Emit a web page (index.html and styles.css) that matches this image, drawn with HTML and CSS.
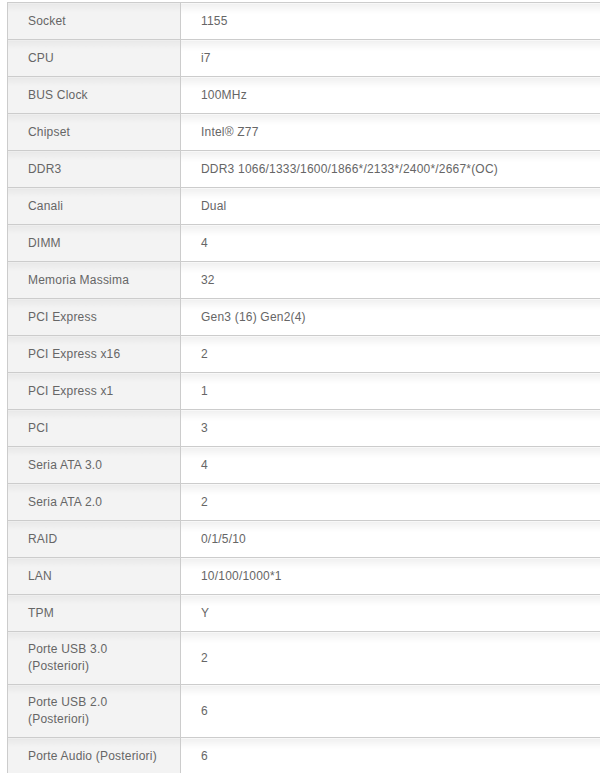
FILE: index.html
```html
<!DOCTYPE html>
<html>
<head>
<meta charset="utf-8">
<link rel="stylesheet" href="styles.css">
</head>
<body>
<table class="specs">
<tbody>
<tr><th>Socket</th><td>1155</td></tr>
<tr><th>CPU</th><td>i7</td></tr>
<tr><th>BUS Clock</th><td>100MHz</td></tr>
<tr><th>Chipset</th><td>Intel® Z77</td></tr>
<tr><th>DDR3</th><td>DDR3 1066/1333/1600/1866*/2133*/2400*/2667*(OC)</td></tr>
<tr><th>Canali</th><td>Dual</td></tr>
<tr><th>DIMM</th><td>4</td></tr>
<tr><th>Memoria Massima</th><td>32</td></tr>
<tr><th>PCI Express</th><td>Gen3 (16) Gen2(4)</td></tr>
<tr><th>PCI Express x16</th><td>2</td></tr>
<tr><th>PCI Express x1</th><td>1</td></tr>
<tr><th>PCI</th><td>3</td></tr>
<tr><th>Seria ATA 3.0</th><td>4</td></tr>
<tr><th>Seria ATA 2.0</th><td>2</td></tr>
<tr><th>RAID</th><td>0/1/5/10</td></tr>
<tr><th>LAN</th><td>10/100/1000*1</td></tr>
<tr><th>TPM</th><td>Y</td></tr>
<tr class="tall"><th>Porte USB 3.0<br>(Posteriori)</th><td>2</td></tr>
<tr class="tall"><th>Porte USB 2.0<br>(Posteriori)</th><td>6</td></tr>
<tr><th>Porte Audio (Posteriori)</th><td>6</td></tr>
</tbody>
</table>
</body>
</html>
```

FILE: styles.css
```css
html, body {
  margin: 0;
  padding: 0;
  background: #ffffff;
  overflow: hidden;
}
body {
  padding: 2px 0 0 7px;
}
.specs {
  border-collapse: collapse;
  width: 620px;
  font-family: "Liberation Sans", Arial, sans-serif;
  font-size: 12px;
  letter-spacing: 0.2px;
  color: #666666;
  border-top: 1px solid #cccccc;
  border-left: 1px solid #cccccc;
}
.specs th,
.specs td {
  height: 37px;
  padding: 0 0 0 20px;
  text-align: left;
  font-weight: normal;
  vertical-align: middle;
  border-bottom: 1px solid #cccccc;
  line-height: 17px;
  box-sizing: border-box;
}
.specs th {
  width: 173px;
  background: linear-gradient(to bottom, #e8e8e8 0px, #f3f3f3 9px, #f3f3f3 100%);
  border-right: 1px solid #cccccc;
}
.specs td {
  padding-left: 20px;
  background: linear-gradient(to bottom, #f0f0f0 0px, #ffffff 10px, #ffffff 100%);
}
.specs tr.tall th,
.specs tr.tall td {
  height: 53px;
}
```
